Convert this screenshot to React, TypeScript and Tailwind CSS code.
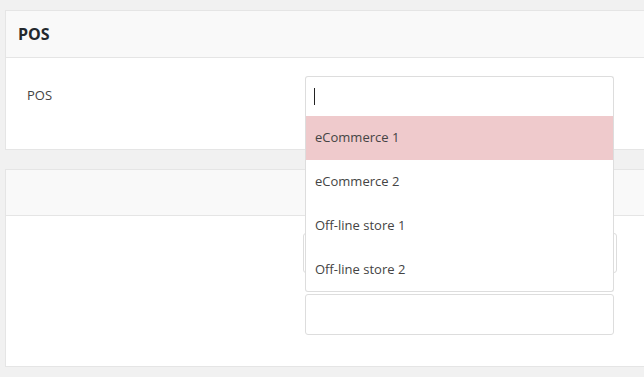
const options = ['eCommerce 1', 'eCommerce 2', 'Off-line store 1', 'Off-line store 2'];

export default function App() {
  return (
    <div
      className="h-[377px] w-[644px] overflow-hidden bg-[#f1f1f1] pl-[5px] pt-[10px] text-[13px] text-[#444]"
      style={{ fontFamily: '"Open Sans", "Liberation Sans", sans-serif' }}
    >
      {/* first card */}
      <div className="w-[700px] border border-[#e5e5e5] bg-white">
        <div className="flex h-[47px] items-center border-b border-[#e5e5e5] bg-[#f9f9f9] pl-[12px]">
          <h2 className="text-[16px] font-bold leading-none text-[#23282d]">POS</h2>
        </div>
        <div className="flex h-[91px]">
          <div className="w-[299px] pl-[21px] pt-[27px] leading-[20px]">POS</div>
          <div className="relative mt-[18px] h-[40px] w-[309px]">
            <div className="flex h-full items-center rounded-t-[3px] border border-b-0 border-[#ddd] pl-[8px]">
              <span className="h-[17px] w-px bg-[#222]" />
            </div>
            <ul className="absolute left-0 top-[40px] z-10 w-full rounded-b-[3px] border border-t-0 border-[#ddd] bg-white">
              {options.map((o, i) => (
                <li
                  key={o}
                  className={
                    'flex items-center pl-[9px] ' +
                    (i === 0 ? 'bg-[#efcacc] ' : '') +
                    (i === 3 ? 'h-[43px]' : 'h-[44px]')
                  }
                >
                  {o}
                </li>
              ))}
            </ul>
          </div>
        </div>
      </div>

      {/* second card */}
      <div className="mt-[19px] w-[700px] border border-[#e5e5e5] bg-white">
        <div className="h-[46px] border-b border-[#e5e5e5] bg-[#f9f9f9]" />
        <div className="flex h-[150px] flex-col">
          <div className="ml-[297px] mt-[17px] h-[40px] w-[314px] rounded-[3px] border border-[#ddd]" />
          <div className="ml-[299px] mt-[21px] h-[41px] w-[309px] rounded-[3px] border border-[#ddd]" />
        </div>
      </div>
    </div>
  );
}
